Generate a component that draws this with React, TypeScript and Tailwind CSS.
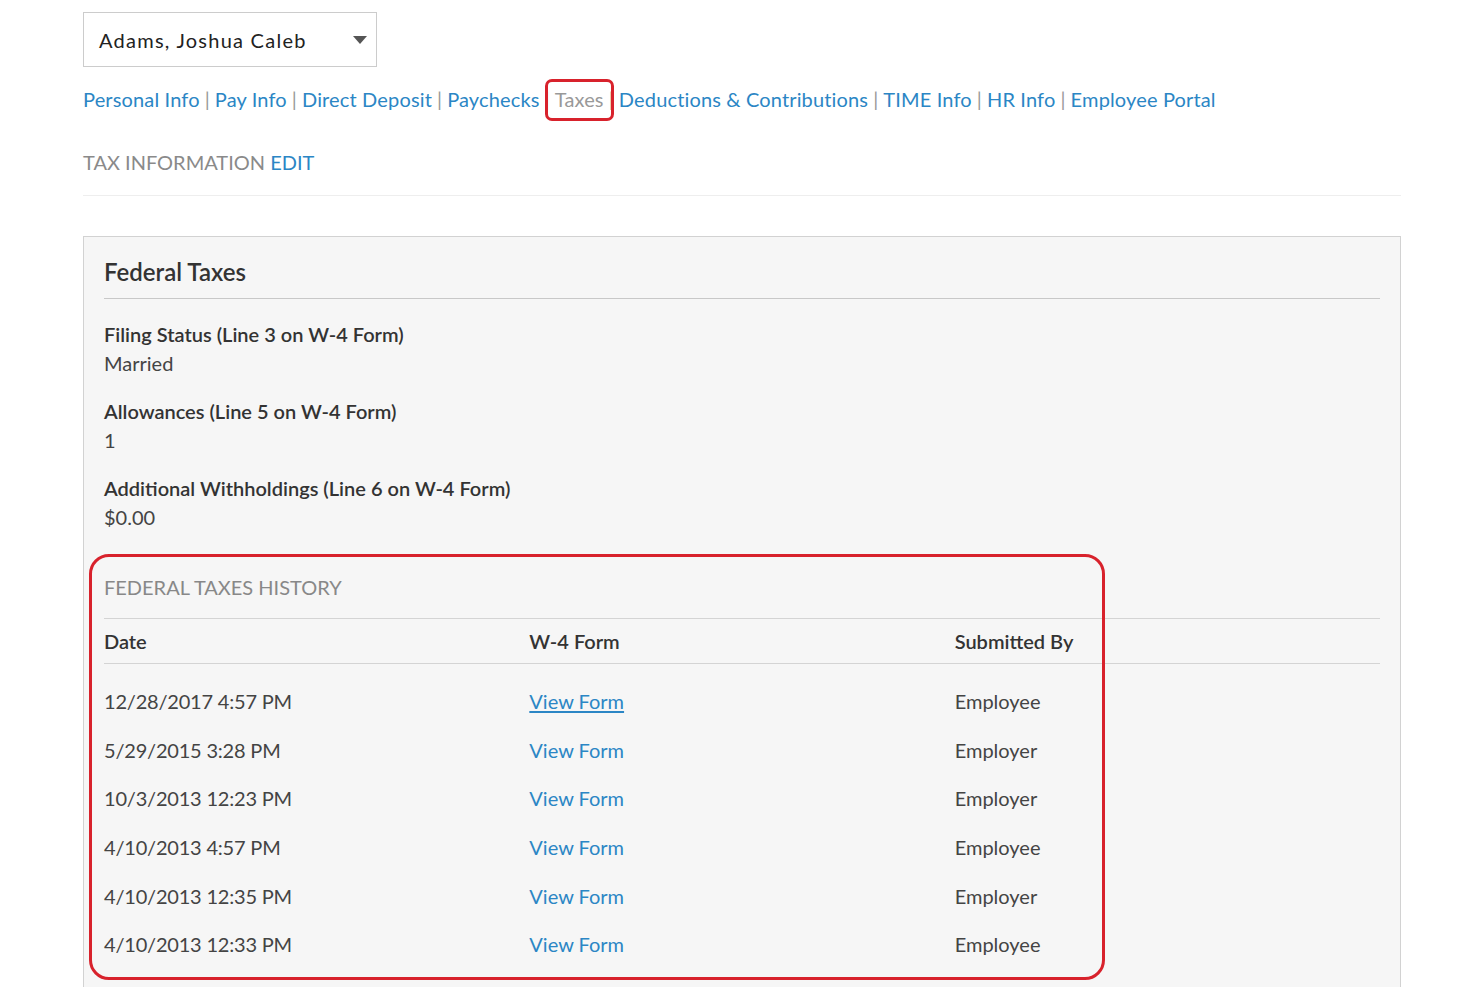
import React from "react"

const NAV = [
  "Personal Info",
  "Pay Info",
  "Direct Deposit",
  "Paychecks",
  "Taxes",
  "Deductions & Contributions",
  "TIME Info",
  "HR Info",
  "Employee Portal",
]

const HISTORY = [
  { date: "12/28/2017 4:57 PM", by: "Employee", hover: true },
  { date: "5/29/2015 3:28 PM", by: "Employer" },
  { date: "10/3/2013 12:23 PM", by: "Employer" },
  { date: "4/10/2013 4:57 PM", by: "Employee" },
  { date: "4/10/2013 12:35 PM", by: "Employer" },
  { date: "4/10/2013 12:33 PM", by: "Employee" },
]

const FIELDS = [
  { label: "Filing Status (Line 3 on W-4 Form)", value: "Married" },
  { label: "Allowances (Line 5 on W-4 Form)", value: "1" },
  { label: "Additional Withholdings (Line 6 on W-4 Form)", value: "$0.00" },
]

export default function App() {
  return (
    <div className="min-h-[987px] bg-white font-['Lato','Open_Sans',sans-serif] text-[#444] overflow-hidden">
      <div className="ml-[83px] w-[1318px] pt-[12px]">
        {/* employee picker */}
        <div className="flex h-[55px] w-[294px] items-center justify-between border border-[#ccc] bg-white pl-[15px] pr-[8px]">
          <span className="text-[20px] tracking-[1.25px] text-[#222]">Adams, Joshua Caleb</span>
          <svg width="14" height="8" viewBox="0 0 14 8" className="mr-[1px]">
            <path d="M0 0 H14 L7 8 Z" fill="#555" />
          </svg>
        </div>

        {/* tabs */}
        <div className="mt-[18px] flex h-[28px] items-center text-[20px] leading-[28px] tracking-[0.15px]">
          {NAV.map((n, i) => (
            <React.Fragment key={n}>
              {i > 0 && <span className="mx-[5px] text-[#999]">|</span>}
              {n === "Taxes" ? (
                <span className="relative text-[#999]">
                  {n}
                  <span className="absolute left-[-10px] right-[-10px] top-[-6px] bottom-[-8px] rounded-[7px] border-[3px] border-[#d8222c]" />
                </span>
              ) : (
                <a className="text-[#2b86c5]">{n}</a>
              )}
            </React.Fragment>
          ))}
        </div>

        <div className="mt-[35px] text-[20px] leading-[28px] text-[#8a8a8a]">
          TAX INFORMATION <a className="text-[#2b86c5]">EDIT</a>
        </div>
        <div className="mt-[19px] h-px bg-[#eee]" />

        {/* federal taxes panel */}
        <div className="mt-[40px] border border-[#d2d2d2] bg-[#f6f6f6] px-[20px] pt-[18px] pb-[40px]">
          <div className="text-[24px] leading-[34px] font-semibold text-[#333]">Federal Taxes</div>
          <div className="mt-[9px] h-px bg-[#c8c8c8]" />

          <div className="mt-[21px] flex flex-col gap-[19px]">
            {FIELDS.map((f) => (
              <div key={f.label}>
                <div className="text-[20px] leading-[29px] font-semibold text-[#333]">{f.label}</div>
                <div className="text-[20px] leading-[29px] text-[#444]">{f.value}</div>
              </div>
            ))}
          </div>

          <div className="relative mt-[41px]">
            <div className="pointer-events-none absolute left-[-15px] top-[-19px] h-[426px] w-[1016px] rounded-[20px] border-[3px] border-[#d8222c]" />
            <div className="text-[20px] leading-[28px] text-[#888]">FEDERAL TAXES HISTORY</div>
            <div className="mt-[17px] h-px bg-[#d4d4d4]" />
            <div className="grid h-[44px] grid-cols-3 items-center text-[20px] font-semibold text-[#333]">
              <div>Date</div>
              <div>W-4 Form</div>
              <div>Submitted By</div>
            </div>
            <div className="h-px bg-[#d4d4d4]" />
            <div className="pt-[13px]">
              {HISTORY.map((r) => (
                <div key={r.date} className="grid h-[48.6px] grid-cols-3 items-center text-[20px] text-[#444]">
                  <div className="tracking-[-0.2px]">{r.date}</div>
                  <div>
                    <a className={`text-[#2b86c5] ${r.hover ? "underline underline-offset-2" : ""}`}>View Form</a>
                  </div>
                  <div>{r.by}</div>
                </div>
              ))}
            </div>
          </div>
        </div>
      </div>
    </div>
  )
}
